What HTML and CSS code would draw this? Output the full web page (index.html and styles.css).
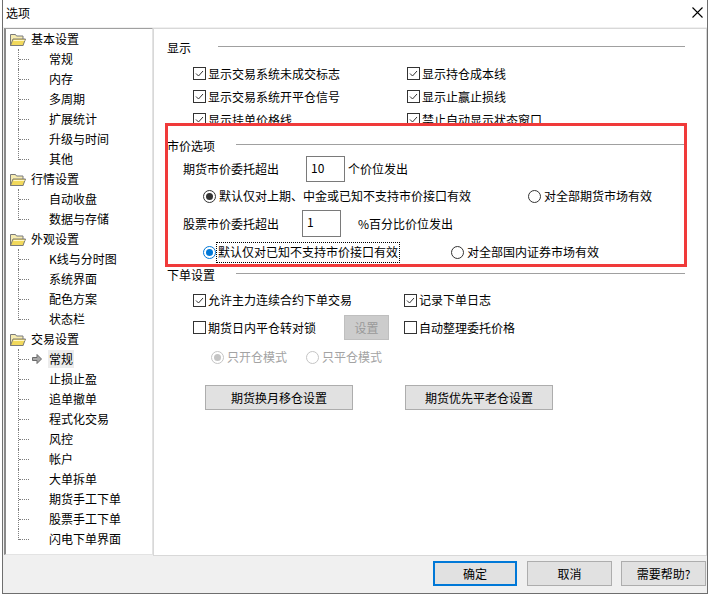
FILE: index.html
```html
<!DOCTYPE html>
<html lang="zh-CN">
<head>
<meta charset="utf-8">
<title>选项</title>
<link rel="stylesheet" href="styles.css">
</head>
<body>
<div class="window">
  <div class="titlebar">
    <span class="title">选项</span>
    <svg class="close" width="11" height="11" viewBox="0 0 11 11"><path d="M0.5 0.5L10.5 10.5M10.5 0.5L0.5 10.5" stroke="#000" stroke-width="1.1" fill="none"/></svg>
  </div>
  <div class="main">
    <div class="tree">
      <div class="node"><svg class="folder" width="16" height="13" viewBox="0 0 16 13"><path d="M0.5 1.5h5l1 1.5h6.5v9.5h-12.5z" fill="#f7ecb0" stroke="#7a7a7a"/><path d="M0.5 12.5l2.5-6.5h12.5l-2.5 6.5z" fill="#f2d95c" stroke="#7a7a7a" stroke-linejoin="round"/><path d="M3.5 7.5h11" stroke="#fff8c8"/></svg><span class="label">基本设置</span></div>
      <div class="children">
        <div class="leaf"><span class="conn"><i></i></span><span class="slot"></span><span class="label">常规</span></div>
        <div class="leaf"><span class="conn"><i></i></span><span class="slot"></span><span class="label">内存</span></div>
        <div class="leaf"><span class="conn"><i></i></span><span class="slot"></span><span class="label">多周期</span></div>
        <div class="leaf"><span class="conn"><i></i></span><span class="slot"></span><span class="label">扩展统计</span></div>
        <div class="leaf"><span class="conn"><i></i></span><span class="slot"></span><span class="label">升级与时间</span></div>
        <div class="leaf last"><span class="conn"><i></i></span><span class="slot"></span><span class="label">其他</span></div>
      </div>
      <div class="node"><svg class="folder" width="16" height="13" viewBox="0 0 16 13"><path d="M0.5 1.5h5l1 1.5h6.5v9.5h-12.5z" fill="#f7ecb0" stroke="#7a7a7a"/><path d="M0.5 12.5l2.5-6.5h12.5l-2.5 6.5z" fill="#f2d95c" stroke="#7a7a7a" stroke-linejoin="round"/><path d="M3.5 7.5h11" stroke="#fff8c8"/></svg><span class="label">行情设置</span></div>
      <div class="children">
        <div class="leaf"><span class="conn"><i></i></span><span class="slot"></span><span class="label">自动收盘</span></div>
        <div class="leaf last"><span class="conn"><i></i></span><span class="slot"></span><span class="label">数据与存储</span></div>
      </div>
      <div class="node"><svg class="folder" width="16" height="13" viewBox="0 0 16 13"><path d="M0.5 1.5h5l1 1.5h6.5v9.5h-12.5z" fill="#f7ecb0" stroke="#7a7a7a"/><path d="M0.5 12.5l2.5-6.5h12.5l-2.5 6.5z" fill="#f2d95c" stroke="#7a7a7a" stroke-linejoin="round"/><path d="M3.5 7.5h11" stroke="#fff8c8"/></svg><span class="label">外观设置</span></div>
      <div class="children">
        <div class="leaf"><span class="conn"><i></i></span><span class="slot"></span><span class="label">K线与分时图</span></div>
        <div class="leaf"><span class="conn"><i></i></span><span class="slot"></span><span class="label">系统界面</span></div>
        <div class="leaf"><span class="conn"><i></i></span><span class="slot"></span><span class="label">配色方案</span></div>
        <div class="leaf last"><span class="conn"><i></i></span><span class="slot"></span><span class="label">状态栏</span></div>
      </div>
      <div class="node"><svg class="folder" width="16" height="13" viewBox="0 0 16 13"><path d="M0.5 1.5h5l1 1.5h6.5v9.5h-12.5z" fill="#f7ecb0" stroke="#7a7a7a"/><path d="M0.5 12.5l2.5-6.5h12.5l-2.5 6.5z" fill="#f2d95c" stroke="#7a7a7a" stroke-linejoin="round"/><path d="M3.5 7.5h11" stroke="#fff8c8"/></svg><span class="label">交易设置</span></div>
      <div class="children">
        <div class="leaf"><span class="conn"><i></i></span><span class="slot"><svg width="10" height="10" viewBox="0 0 10 10"><path d="M0.5 3.5h4.5v-3l4.5 4.5-4.5 4.5v-3h-4.5z" fill="#a8a8a8" stroke="#6a6a6a" stroke-linejoin="round"/></svg></span><span class="label selected">常规</span></div>
        <div class="leaf"><span class="conn"><i></i></span><span class="slot"></span><span class="label">止损止盈</span></div>
        <div class="leaf"><span class="conn"><i></i></span><span class="slot"></span><span class="label">追单撤单</span></div>
        <div class="leaf"><span class="conn"><i></i></span><span class="slot"></span><span class="label">程式化交易</span></div>
        <div class="leaf"><span class="conn"><i></i></span><span class="slot"></span><span class="label">风控</span></div>
        <div class="leaf"><span class="conn"><i></i></span><span class="slot"></span><span class="label">帐户</span></div>
        <div class="leaf"><span class="conn"><i></i></span><span class="slot"></span><span class="label">大单拆单</span></div>
        <div class="leaf"><span class="conn"><i></i></span><span class="slot"></span><span class="label">期货手工下单</span></div>
        <div class="leaf"><span class="conn"><i></i></span><span class="slot"></span><span class="label">股票手工下单</span></div>
        <div class="leaf last"><span class="conn"><i></i></span><span class="slot"></span><span class="label">闪电下单界面</span></div>
      </div>
    </div>

    <div class="panel">
      <div class="group-head"><span>显示</span><i class="rule rule-show"></i></div>
      <div class="check-grid show-grid">
        <label class="chk"><svg class="box" width="13" height="13" viewBox="0 0 13 13"><rect x="0.5" y="0.5" width="12" height="12" fill="#fff" stroke="#333"/><path d="M3 6.5l2.5 2.5 4.5-5" fill="none" stroke="#333"/></svg>显示交易系统未成交标志</label>
        <label class="chk"><svg class="box" width="13" height="13" viewBox="0 0 13 13"><rect x="0.5" y="0.5" width="12" height="12" fill="#fff" stroke="#333"/><path d="M3 6.5l2.5 2.5 4.5-5" fill="none" stroke="#333"/></svg>显示持仓成本线</label>
        <label class="chk"><svg class="box" width="13" height="13" viewBox="0 0 13 13"><rect x="0.5" y="0.5" width="12" height="12" fill="#fff" stroke="#333"/><path d="M3 6.5l2.5 2.5 4.5-5" fill="none" stroke="#333"/></svg>显示交易系统开平仓信号</label>
        <label class="chk"><svg class="box" width="13" height="13" viewBox="0 0 13 13"><rect x="0.5" y="0.5" width="12" height="12" fill="#fff" stroke="#333"/><path d="M3 6.5l2.5 2.5 4.5-5" fill="none" stroke="#333"/></svg>显示止赢止损线</label>
        <label class="chk"><svg class="box" width="13" height="13" viewBox="0 0 13 13"><rect x="0.5" y="0.5" width="12" height="12" fill="#fff" stroke="#333"/><path d="M3 6.5l2.5 2.5 4.5-5" fill="none" stroke="#333"/></svg>显示挂单价格线</label>
        <label class="chk"><svg class="box" width="13" height="13" viewBox="0 0 13 13"><rect x="0.5" y="0.5" width="12" height="12" fill="#fff" stroke="#333"/><path d="M3 6.5l2.5 2.5 4.5-5" fill="none" stroke="#333"/></svg>禁止自动显示状态窗口</label>
      </div>

      <div class="group-head market-head"><span>市价选项</span><i class="rule"></i></div>
      <div class="field-row fut-row"><span class="field-label">期货市价委托超出</span><span class="input">10</span><span class="unit">个价位发出</span></div>
      <div class="radio-row fut-radios">
        <label class="radio first"><svg class="rb" width="13" height="13" viewBox="0 0 13 13"><circle cx="6.5" cy="6.5" r="6" fill="#fff" stroke="#333"/><circle cx="6.5" cy="6.5" r="3.5" fill="#333"/></svg>默认仅对上期、中金或已知不支持市价接口有效</label>
        <label class="radio"><svg class="rb" width="13" height="13" viewBox="0 0 13 13"><circle cx="6.5" cy="6.5" r="6" fill="#fff" stroke="#333"/></svg>对全部期货市场有效</label>
      </div>
      <div class="field-row stock-row"><span class="field-label">股票市价委托超出</span><span class="input">1</span><span class="unit">%百分比价位发出</span></div>
      <div class="radio-row stock-radios">
        <label class="radio first"><svg class="rb" width="13" height="13" viewBox="0 0 13 13"><circle cx="6.5" cy="6.5" r="6" fill="#fff" stroke="#0078d7"/><circle cx="6.5" cy="6.5" r="3.5" fill="#0078d7"/></svg><span class="focus">默认仅对已知不支持市价接口有效</span></label>
        <label class="radio"><svg class="rb" width="13" height="13" viewBox="0 0 13 13"><circle cx="6.5" cy="6.5" r="6" fill="#fff" stroke="#333"/></svg>对全部国内证券市场有效</label>
      </div>

      <div class="group-head order-head"><span>下单设置</span><i class="rule"></i></div>
      <div class="order-row row-a">
        <label class="chk col-left"><svg class="box" width="13" height="13" viewBox="0 0 13 13"><rect x="0.5" y="0.5" width="12" height="12" fill="#fff" stroke="#333"/><path d="M3 6.5l2.5 2.5 4.5-5" fill="none" stroke="#333"/></svg>允许主力连续合约下单交易</label>
        <label class="chk"><svg class="box" width="13" height="13" viewBox="0 0 13 13"><rect x="0.5" y="0.5" width="12" height="12" fill="#fff" stroke="#333"/><path d="M3 6.5l2.5 2.5 4.5-5" fill="none" stroke="#333"/></svg>记录下单日志</label>
      </div>
      <div class="order-row row-b">
        <label class="chk col-lock"><svg class="box" width="13" height="13" viewBox="0 0 13 13"><rect x="0.5" y="0.5" width="12" height="12" fill="#fff" stroke="#333"/></svg>期货日内平仓转对锁</label>
        <span class="btn btn-disabled">设置</span>
        <label class="chk"><svg class="box" width="13" height="13" viewBox="0 0 13 13"><rect x="0.5" y="0.5" width="12" height="12" fill="#fff" stroke="#333"/></svg>自动整理委托价格</label>
      </div>
      <div class="order-row row-c">
        <label class="radio disabled mode-first"><svg class="rb" width="13" height="13" viewBox="0 0 13 13"><circle cx="6.5" cy="6.5" r="6" fill="#fff" stroke="#c4c4c4"/><circle cx="6.5" cy="6.5" r="3.5" fill="#c4c4c4"/></svg>只开仓模式</label>
        <label class="radio disabled"><svg class="rb" width="13" height="13" viewBox="0 0 13 13"><circle cx="6.5" cy="6.5" r="6" fill="#fff" stroke="#c4c4c4"/></svg>只平仓模式</label>
      </div>
      <div class="order-row row-d">
        <span class="btn btn-wide">期货换月移仓设置</span>
        <span class="btn btn-wide">期货优先平老仓设置</span>
      </div>

      <div class="highlight"></div>
    </div>
  </div>
  <div class="footer">
    <span class="btn btn-foot btn-default">确定</span>
    <span class="btn btn-foot">取消</span>
    <span class="btn btn-foot">需要帮助?</span>
  </div>
</div>
</body>
</html>
```

FILE: styles.css
```css
* { box-sizing: border-box; }

html, body {
  margin: 0;
  padding: 0;
}

body {
  width: 715px;
  height: 597px;
  overflow: hidden;
  background: #ffffff;
  font-family: "Noto Sans CJK SC", "Microsoft YaHei", sans-serif;
  font-size: 12px;
  color: #000;
}

.window {
  margin-left: 2px;
  width: 706px;
  height: 594px;
  border: 1px solid #6e6e6e;
  border-top: none;
  background: #f0f0f0;
  display: flex;
  flex-direction: column;
}

.titlebar {
  height: 27px;
  flex: none;
  background: #fff;
  display: flex;
  align-items: center;
  justify-content: space-between;
  padding: 0 4px 2px 3px;
}

.title {
  font-size: 12px;
  line-height: 16px;
}

.close {
  display: block;
}

.main {
  display: flex;
  height: 529px;
  flex: none;
  padding: 1px 0 0 1px;
}

/* ---------- tree ---------- */
.tree {
  width: 149px;
  height: 527px;
  background: #fff;
  border-style: solid;
  border-width: 1px 1px 1px 2px;
  border-color: #a0a0a0 #e3e3e3 #e3e3e3 #8a8a8a;
  padding: 0 0 0 2px;
  overflow: hidden;
}

.node {
  height: 20px;
  display: flex;
  align-items: center;
  padding-left: 2px;
}

.folder {
  display: block;
  flex: none;
}

.node .label {
  margin-left: 5px;
}

.label {
  line-height: 16px;
  white-space: nowrap;
}

.children {
  margin-left: 10px;
}

.leaf {
  height: 20px;
  display: flex;
  align-items: center;
}

.conn {
  flex: none;
  width: 11px;
  align-self: stretch;
  border-left: 1px dotted #7c7c7c;
  display: flex;
  align-items: center;
}

.conn i {
  display: block;
  width: 10px;
  border-top: 1px dotted #7c7c7c;
}

.leaf.last .conn {
  align-self: flex-start;
  height: 11px;
  align-items: flex-end;
}

.slot {
  flex: none;
  width: 20px;
  display: flex;
  align-items: center;
  padding-left: 3px;
}

.slot svg {
  display: block;
}

.leaf .label {
  padding: 0 1px;
  margin-left: -1px;
}

.label.selected {
  background: #ececec;
  padding: 1px 1px;
}

/* ---------- panel ---------- */
.panel {
  position: relative;
  width: 554px;
  height: 528px;
  background: #fff;
  border: 1px solid #d8d8d8;
  padding: 9px 21px 0 13px;
}

.group-head {
  height: 20px;
  display: flex;
  align-items: center;
}

.group-head span {
  line-height: 16px;
  white-space: nowrap;
}

.rule {
  display: block;
  flex: 1;
  height: 0;
  border-top: 1px solid #a0a0a0;
  margin-left: 21px;
  margin-bottom: 4px;
}

.rule.rule-show {
  margin-left: 27px;
}

.check-grid {
  display: grid;
  grid-template-columns: 214px auto;
  grid-auto-rows: 23px;
  padding-left: 26px;
  margin-top: 4px;
}

.chk,
.radio {
  display: flex;
  align-items: center;
  white-space: nowrap;
  line-height: 16px;
}

.box {
  display: block;
  flex: none;
  margin-right: 2px;
}

.rb {
  display: block;
  flex: none;
  margin-right: 3px;
}

.market-head {
  margin-top: 5px;
}

.field-row {
  display: flex;
  align-items: center;
  padding-left: 16px;
  height: 26px;
}

.fut-row {
  margin-top: 0;
}

.stock-row {
  margin-top: 4px;
  height: 27px;
}

.field-label {
  white-space: nowrap;
  line-height: 16px;
}

.fut-row .field-label {
  width: 123px;
}

.stock-row .field-label {
  width: 119px;
}

.input {
  width: 39px;
  height: 100%;
  border: 1px solid #7a7a7a;
  background: #fff;
  padding: 3px 0 0 4px;
  line-height: 16px;
  font-family: "Noto Sans CJK SC", "Microsoft YaHei", sans-serif;
}

.fut-row .unit {
  margin-left: 3px;
}

.stock-row .unit {
  margin-left: 17px;
}

.unit {
  white-space: nowrap;
  line-height: 16px;
}

.radio-row {
  display: flex;
  align-items: center;
  height: 20px;
  padding-left: 36px;
}

.fut-radios {
  margin-top: 4px;
}

.fut-radios .first {
  width: 325px;
}

.stock-radios {
  margin-top: 5px;
}

.stock-radios .first {
  width: 248px;
}

.focus {
  outline: 1px dotted #000;
  outline-offset: 0;
  padding: 1px 1px 2px 1px;
  margin-left: -2px;
}

.order-head {
  margin-top: 3px;
}

.order-row {
  display: flex;
  align-items: center;
  padding-left: 26px;
}

.row-a {
  height: 22px;
  margin-top: 4px;
}

.col-left {
  width: 211px;
}

.row-b {
  height: 25px;
  margin-top: 4px;
}

.col-lock {
  width: 151px;
}

.row-c {
  height: 20px;
  margin-top: 7px;
  padding-left: 44px;
}

.mode-first {
  width: 95px;
}

.disabled {
  color: #a3a3a3;
}

.row-d {
  height: 25px;
  margin-top: 18px;
  padding-left: 38px;
  gap: 52px;
}

.btn {
  display: flex;
  align-items: center;
  justify-content: center;
  height: 25px;
  background: #e1e1e1;
  border: 1px solid #adadad;
  white-space: nowrap;
  line-height: 16px;
}

.btn-wide {
  width: 148px;
}

.btn-disabled {
  width: 45px;
  background: #cccccc;
  border-color: #bfbfbf;
  color: #9a9a9a;
  margin-right: 15px;
}

/* red annotation frame drawn over the market options group */
.highlight {
  position: absolute;
  left: 11px;
  top: 94px;
  width: 522px;
  height: 144px;
  border: 3px solid #f03a3a;
  pointer-events: none;
}

/* ---------- footer ---------- */
.footer {
  flex: 1;
  display: flex;
  justify-content: flex-end;
  align-items: flex-start;
  gap: 9px;
  padding: 5px 1px 0 0;
}

.btn-foot {
  width: 85px;
  height: 25px;
}

.btn-default {
  width: 84px;
  border: 2px solid #0078d7;
  margin-right: 1px;
}
```
